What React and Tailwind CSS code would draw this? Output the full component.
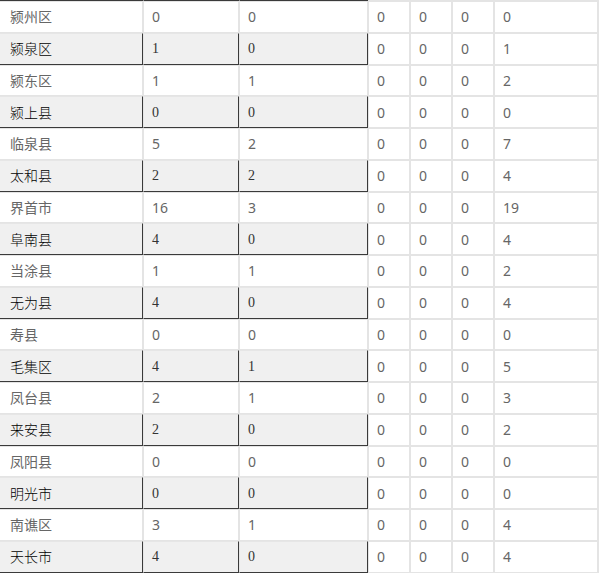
import React from "react";

const rows = [
  ["颍州区", "0", "0", "0", "0", "0", "0"],
  ["颍泉区", "1", "0", "0", "0", "0", "1"],
  ["颍东区", "1", "1", "0", "0", "0", "2"],
  ["颍上县", "0", "0", "0", "0", "0", "0"],
  ["临泉县", "5", "2", "0", "0", "0", "7"],
  ["太和县", "2", "2", "0", "0", "0", "4"],
  ["界首市", "16", "3", "0", "0", "0", "19"],
  ["阜南县", "4", "0", "0", "0", "0", "4"],
  ["当涂县", "1", "1", "0", "0", "0", "2"],
  ["无为县", "4", "0", "0", "0", "0", "4"],
  ["寿县", "0", "0", "0", "0", "0", "0"],
  ["毛集区", "4", "1", "0", "0", "0", "5"],
  ["凤台县", "2", "1", "0", "0", "0", "3"],
  ["来安县", "2", "0", "0", "0", "0", "2"],
  ["凤阳县", "0", "0", "0", "0", "0", "0"],
  ["明光市", "0", "0", "0", "0", "0", "0"],
  ["南谯区", "3", "1", "0", "0", "0", "4"],
  ["天长市", "4", "0", "0", "0", "0", "4"],
];

const sans = "font-['Noto_Sans','Noto_Sans_CJK_SC',sans-serif]";

function LeftCell({ grey, width, pad, children, name }) {
  if (grey) {
    return (
      <div
        className={`${width} ${pad} h-full shrink-0 flex items-center bg-[#f0f0f0] border border-t-[#e6e6e6] border-l-[#e6e6e6] border-r-[#3a3a3a] border-b-[#3a3a3a] ${
          name
            ? `text-[14px] text-black font-light ${sans}`
            : "text-[14px] text-[#333] font-normal font-['Liberation_Serif',serif]"
        }`}
      >
        {children}
      </div>
    );
  }
  return (
    <div
      className={`${width} ${pad} h-full shrink-0 flex items-center bg-white border border-[#e4e4e4] text-[14px] text-[#666] ${sans}`}
    >
      {children}
    </div>
  );
}

function RightCell({ width, extra = "", children }) {
  return (
    <div
      className={`${width} ${extra} h-full shrink-0 flex items-center pl-2 bg-white border border-[#e4e4e4] text-[14px] text-[#666] ${sans}`}
    >
      {children}
    </div>
  );
}

function Row({ data, grey }) {
  return (
    <div className="flex h-[31.75px]">
      <LeftCell grey={grey} width="w-[144px]" pad="pl-[10px]" name>
        {data[0]}
      </LeftCell>
      <LeftCell grey={grey} width="w-[96px]" pad="pl-2">
        {data[1]}
      </LeftCell>
      <LeftCell grey={grey} width="w-[129px]" pad="pl-2">
        {data[2]}
      </LeftCell>
      <RightCell width="w-[42px]">{data[3]}</RightCell>
      <RightCell width="w-[42px]">{data[4]}</RightCell>
      <RightCell width="w-[42px]">{data[5]}</RightCell>
      <RightCell width="w-[105px]" extra="border-r-2">
        {data[6]}
      </RightCell>
    </div>
  );
}

export default function App() {
  return (
    <div className="w-[600px] h-[575px] overflow-hidden bg-white">
      <div className="-mt-[30.75px] -ml-px w-[601px]">
        <Row data={["", "", "", "", "", "", ""]} grey />
        {rows.map((r, i) => (
          <Row key={i} data={r} grey={i % 2 === 1} />
        ))}
      </div>
    </div>
  );
}
